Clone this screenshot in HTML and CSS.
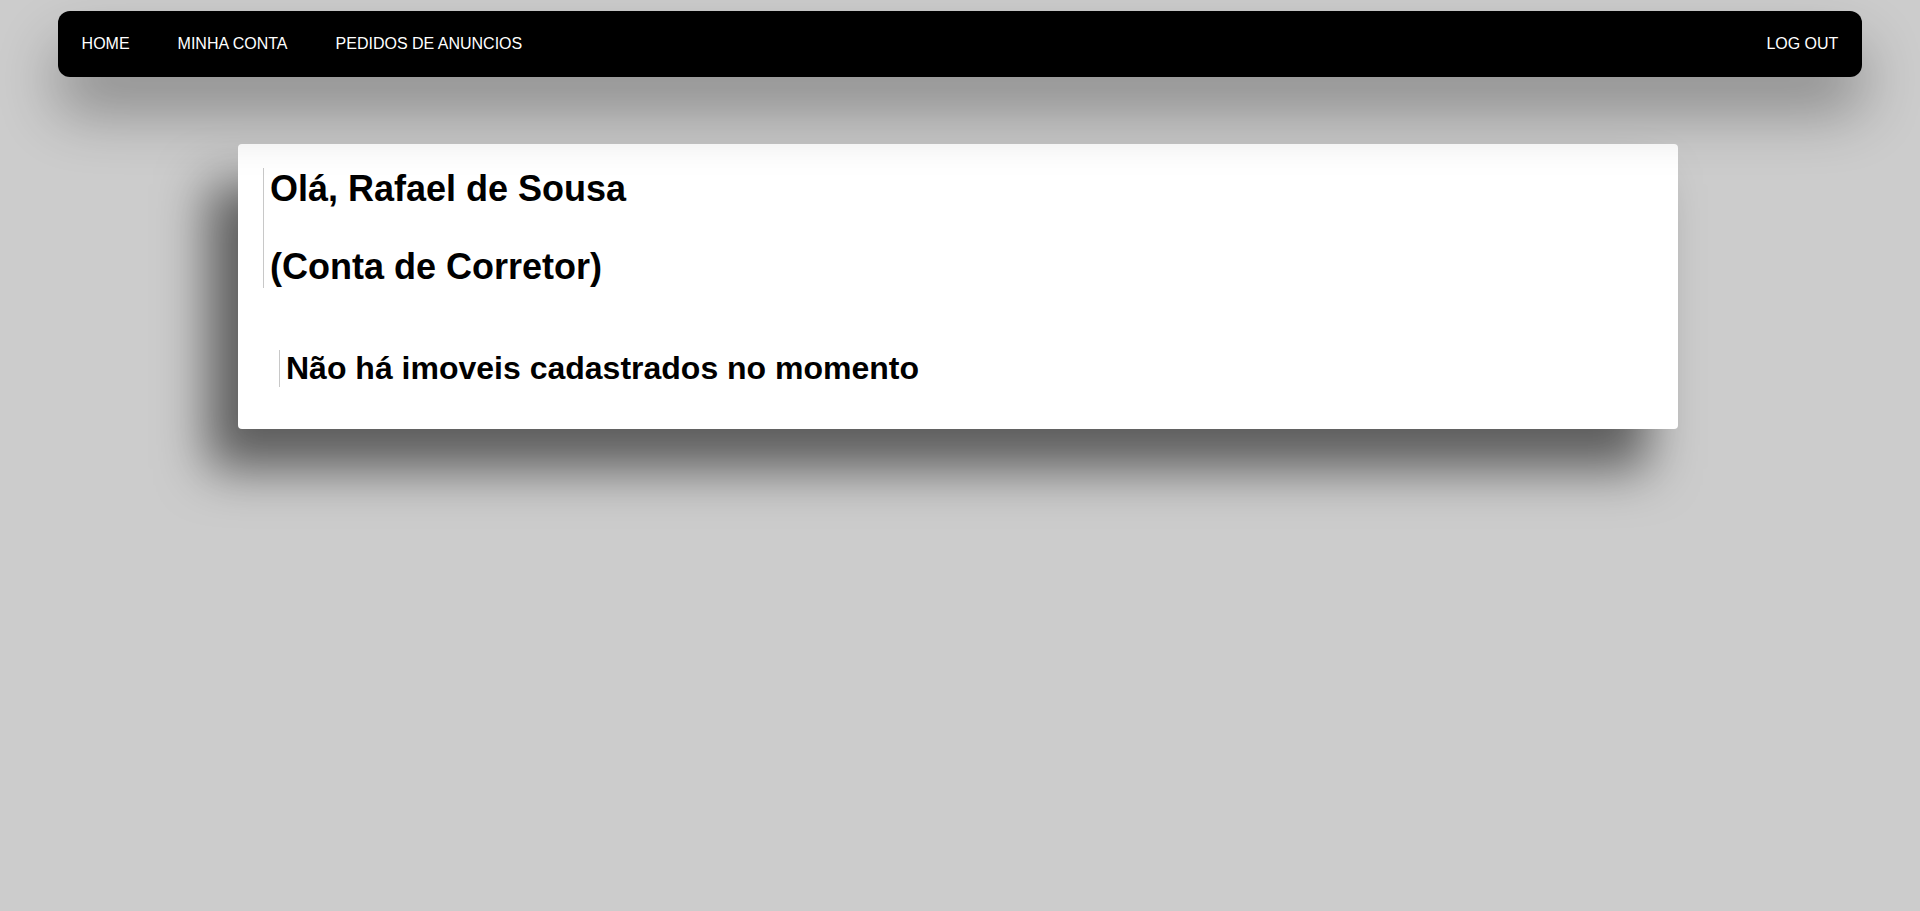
FILE: index.html
```html
<!DOCTYPE html>
<html lang="pt-BR">
<head>
<meta charset="utf-8">
<title>Minha Conta</title>
<link rel="stylesheet" href="styles.css">
</head>
<body>
  <nav class="navbar">
    <ul class="nav-links">
      <li><a href="#" class="nav-link">HOME</a></li>
      <li><a href="#" class="nav-link">MINHA CONTA</a></li>
      <li><a href="#" class="nav-link">PEDIDOS DE ANUNCIOS</a></li>
    </ul>
    <a href="#" class="nav-link">LOG OUT</a>
  </nav>
  <main class="main">
    <section class="card">
      <div class="greeting">
        <h1 class="greeting-title">Olá, Rafael de Sousa</h1>
        <h1 class="greeting-title greeting-sub">(Conta de Corretor)</h1>
      </div>
      <div class="empty">
        <h1 class="empty-title">Não há imoveis cadastrados no momento</h1>
      </div>
    </section>
  </main>
</body>
</html>
```

FILE: styles.css
```css
html, body {
  margin: 0;
  padding: 0;
}

body {
  background: #cccccc;
  font-family: "Liberation Sans", Arial, Helvetica, sans-serif;
  color: #000;
  min-height: 911px;
}

.navbar {
  position: relative;
  z-index: 2;
  display: flex;
  align-items: center;
  justify-content: space-between;
  width: 94%;
  height: 66px;
  margin: 11px auto 0;
  background: #000;
  border-radius: 12px;
  box-shadow: 0 35px 60px rgba(0, 0, 0, 0.32);
}

.nav-links {
  display: flex;
  list-style: none;
  margin: 0;
  padding: 0;
}

.nav-link {
  display: block;
  padding: 0 24px;
  color: #fff;
  font-size: 16px;
  line-height: 66px;
  text-decoration: none;
}

.main {
  padding-right: 4px;
}

.card {
  position: relative;
  z-index: 1;
  width: 1440px;
  box-sizing: border-box;
  margin: 67px auto 0;
  padding: 24px 24px 42px 25px;
  background: #fff;
  border-radius: 4px;
  box-shadow: -30px 40px 50px rgba(0, 0, 0, 0.55);
}

.greeting {
  border-left: 1px solid #c8c8c8;
  padding-left: 6px;
}

.greeting-title {
  margin: 0;
  font-size: 36px;
  font-weight: bold;
  line-height: normal;
}

.greeting-sub {
  margin-top: 36px;
}

.empty {
  margin: 62px 0 0 16px;
  border-left: 1px solid #c8c8c8;
  padding-left: 6px;
}

.empty-title {
  margin: 0;
  font-size: 32px;
  font-weight: bold;
  line-height: normal;
}
```
